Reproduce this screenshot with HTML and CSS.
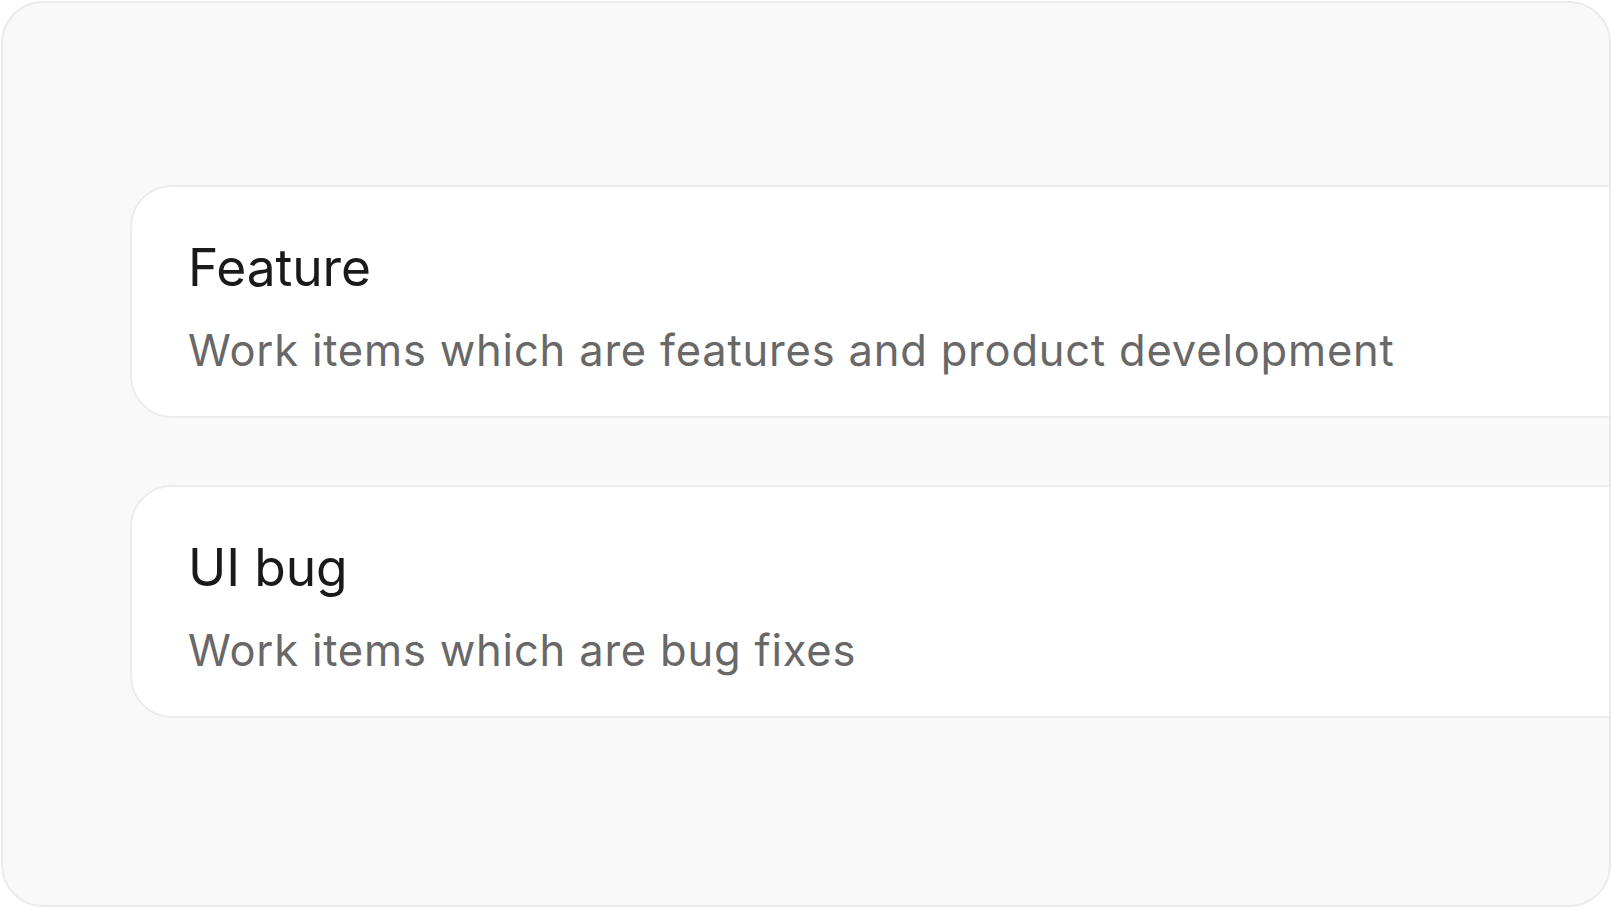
FILE: index.html
```html
<!DOCTYPE html>
<html>
<head>
<meta charset="utf-8">
<link rel="stylesheet" href="styles.css">
</head>
<body>
<div class="frame">
  <div class="list">
    <div class="card">
      <div class="title">Feature</div>
      <div class="desc">Work items which are features and product development</div>
    </div>
    <div class="card">
      <div class="title">UI bug</div>
      <div class="desc">Work items which are bug fixes</div>
    </div>
  </div>
</div>
</body>
</html>
```
FILE: styles.css
```css
html, body {
  margin: 0;
  padding: 0;
  background: #ffffff;
}
body {
  padding: 1px;
  font-family: Inter, "Noto Sans", sans-serif;
}
.frame {
  box-sizing: border-box;
  width: 1610px;
  height: 906px;
  background: #f9f9f9;
  border: 2px solid #ebebeb;
  border-radius: 42px;
  overflow: hidden;
  padding: 182px 0 0 127px;
}
.list {
  display: flex;
  flex-direction: column;
  gap: 67px;
}
.card {
  box-sizing: border-box;
  width: 1600px;
  height: 233px;
  background: #ffffff;
  border: 2px solid #ececec;
  border-radius: 42px;
  padding: 48px 0 0 56px;
}
.title {
  font-size: 51.5px;
  line-height: 64px;
  letter-spacing: -0.1px;
  color: #1a1a1a;
  font-weight: 400;
}
.desc {
  margin-top: 25px;
  font-size: 43.5px;
  line-height: 53px;
  letter-spacing: 0.8px;
  color: #686868;
}
```
